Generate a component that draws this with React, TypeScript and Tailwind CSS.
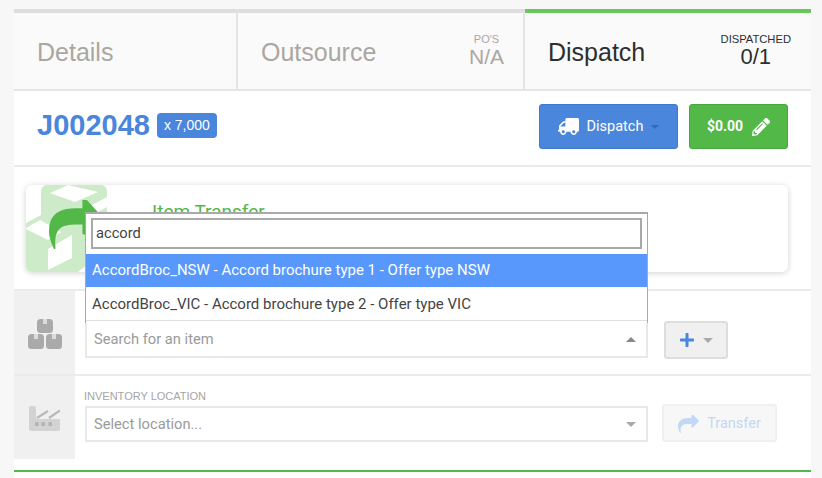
import { FaPencilAlt, FaPlus, FaTruck } from 'react-icons/fa';

const SHARE_PATH =
  'M1792 640q0 26-19 45l-512 512q-19 19-45 19t-45-19-19-45v-256h-224q-98 0-175.5 6t-154 21.5-133 42.5-105.5 69.5-80 101-48.5 138.5-17.5 181q0 55 5 123 0 6 2.5 23.5t2.5 26.5q0 15-8.5 25t-23.5 10q-16 0-28-17-7-9-13-22t-13.5-30-10.5-24q-127-285-127-451 0-199 53-333 162-403 875-403h224v-256q0-26 19-45t45-19 45 19l512 512q19 19 19 45z';

const Caret = ({ up, color, w = 10 }: { up?: boolean; color: string; w?: number }) => (
  <svg width={w} height={w / 2} viewBox="0 0 10 5" style={{ transform: up ? 'rotate(180deg)' : undefined }}>
    <path d="M0 0h10L5 5z" fill={color} />
  </svg>
);

// Boxes logo of the transfer card
const TransferLogo = () => (
  <svg width="82" height="87" viewBox="0 0 82 87" className="shrink-0">
    <path
      d="M21 0h54a6 6 0 0 1 6 6v58L52 87H6a6 6 0 0 1-6-6V38l15-8V6a6 6 0 0 1 6-6z"
      fill="#cdebc8"
    />
    <path d="M24 8 L42 0 L72 7 L49 17z" fill="#fff" />
    <path d="M0 43 L14 35 L35 47 L22 55 L0 44z" fill="#fff" />
    <path d="M22 64 L46 50 V73 L22 85z" fill="#fff" />
    <path d="M62 22 L81 12 V22 L70 28z" fill="#fff" />
    <svg x="23" y="15" width="52" height="49" viewBox="0 128 1792 1536" preserveAspectRatio="none">
      <path d={SHARE_PATH} fill="#52b848" />
    </svg>
  </svg>
);

const BoxesIcon = () => (
  <svg width="34" height="30" viewBox="0 0 34 30">
    <rect x="9" y="0" width="16" height="14" rx="3.5" fill="#aaaaaa" />
    <rect x="0" y="15" width="16" height="15" rx="3.5" fill="#aaaaaa" />
    <rect x="18" y="15" width="16" height="15" rx="3.5" fill="#aaaaaa" />
    <rect x="15" y="0" width="4" height="5" fill="#dcdcdc" />
    <rect x="6" y="15" width="4" height="5" fill="#dcdcdc" />
    <rect x="24" y="15" width="4" height="5" fill="#dcdcdc" />
  </svg>
);

const FactoryIcon = () => (
  <svg width="31" height="25" viewBox="0 0 31 25">
    <path d="M2 0h3a2 2 0 0 1 2 2v11h24v10a2 2 0 0 1-2 2H2a2 2 0 0 1-2-2V2a2 2 0 0 1 2-2z" fill="#d3d3d3" />
    <path d="M8 12 L19 5 M20 12 L31 4.5" stroke="#b9b9b9" strokeWidth="2.2" />
    <rect x="6" y="16" width="3.5" height="4" fill="#b5b5b5" />
    <rect x="12.5" y="16" width="3.5" height="4" fill="#b5b5b5" />
    <rect x="19.5" y="16" width="3.5" height="4" fill="#b5b5b5" />
  </svg>
);

export default function App() {
  return (
    <div className="h-[478px] w-[822px] overflow-hidden bg-[#f7f7f7] pl-[14px] pr-[11px] pt-[9px] font-['Roboto',sans-serif]">
      <div className="relative h-[469px] bg-white">
        {/* tabs */}
        <div className="flex h-[82px] border-b-2 border-[#e5e5e5] bg-[#fafafa] font-['Liberation_Sans',sans-serif]">
          <div className="w-[224px] border-r-2 border-t-4 border-r-[#e5e5e5] border-t-[#dedede] pl-[23px] pt-[25px] text-[25px] leading-[28px] text-[#aaa7a2]">
            Details
          </div>
          <div className="flex w-[287px] items-start justify-between border-r-2 border-t-4 border-r-[#e5e5e5] border-t-[#dedede] pl-[23px] pr-[19px] pt-[25px]">
            <span className="text-[25px] leading-[28px] text-[#aaa7a2]">Outsource</span>
            <div className="-mt-[5px] text-center text-[#aaa7a2]">
              <div className="text-[11px] leading-[12px]">PO'S</div>
              <div className="text-[21px] leading-[24px]">N/A</div>
            </div>
          </div>
          <div className="flex flex-1 items-start justify-between border-t-4 border-[#67c75c] pl-[23px] pr-[20px] pt-[25px] text-[#2e2e2e]">
            <span className="text-[25px] leading-[28px]">Dispatch</span>
            <div className="-mt-[5px] text-center">
              <div className="text-[11.2px] leading-[12px]">DISPATCHED</div>
              <div className="text-[22px] leading-[24px]">0/1</div>
            </div>
          </div>
        </div>

        {/* job header */}
        <div className="flex h-[76px] items-start justify-between border-b-2 border-[#ebebeb] pl-[23px] pr-[23px] pt-[13px]">
          <div className="flex items-center gap-[7px] pt-[5px] font-['Liberation_Sans',sans-serif]">
            <span className="text-[29px] font-bold leading-[32px] text-[#4a86dc]">J002048</span>
            <span className="rounded-[4px] bg-[#4a86dc] px-[7px] py-[3px] text-[14px] leading-[19px] text-white">x 7,000</span>
          </div>
          <div className="flex gap-[11px]">
            <button className="flex h-[45px] w-[139px] items-center justify-center gap-[8px] rounded-[3px] border border-[#4279c8] bg-[#4a86dc] text-[14.5px] text-white">
              <FaTruck size={21} className="-scale-x-100" />
              <span>Dispatch</span>
              <Caret color="#3568b4" w={8} />
            </button>
            <button className="flex h-[45px] w-[99px] items-center justify-center gap-[9px] rounded-[3px] border border-[#4aa840] bg-[#52b848] text-[14px] font-bold text-white">
              <span>$0.00</span>
              <FaPencilAlt size={18} />
            </button>
          </div>
        </div>

        {/* item transfer */}
        <div className="relative h-[124px] border-b-2 border-[#ebebeb] px-[12px] pt-[18px]">
          <div className="flex h-[87px] w-[762px] rounded-[6px] bg-white shadow-[0_1px_6px_rgba(0,0,0,0.18)]">
            <TransferLogo />
            <span className="pl-[44px] pt-[16px] text-[19px] leading-[22px] text-[#52b848]">Item Transfer</span>
          </div>

          {/* open dropdown */}
          <div className="absolute left-[71px] top-[45px] z-10 h-[111px] w-[563px] border border-b-0 border-t-2 border-[#a9a9a9] bg-white pt-[4px] text-[15px] text-[#444]">
            <div className="mx-[5px] flex h-[31px] items-center border-2 border-[#a9a9a9] px-[3px] text-[14.7px]">accord</div>
            <div className="mt-[5px] flex h-[33px] items-center bg-[#5897fb] px-[6px] text-white">
              AccordBroc_NSW - Accord brochure type 1 - Offer type NSW
            </div>
            <div className="flex h-[34px] items-center border-b border-[#dedede] px-[6px] pt-[1px]">
              AccordBroc_VIC - Accord brochure type 2 - Offer type VIC
            </div>
          </div>
        </div>

        {/* item search */}
        <div className="flex h-[85px] border-b-2 border-[#ebebeb]">
          <div className="flex w-[61px] items-center justify-center bg-[#f0f0f0] pt-[2px]">
            <BoxesIcon />
          </div>
          <div className="flex items-start gap-[16px] pl-[10px] pt-[30px]">
            <div className="flex h-[37px] w-[563px] items-center justify-between border-2 border-[#e8e8e8] pl-[7px] pr-[10px] text-[14.7px] text-[#9a9a9a]">
              <span>Search for an item</span>
              <Caret up color="#888888" />
            </div>
            <button className="flex h-[38px] w-[64px] items-center justify-center gap-[8px] rounded-[3px] border-2 border-[#dddddd] bg-[#f0f0f0]">
              <FaPlus size={16} className="text-[#4a86dc]" />
              <Caret color="#aaaaaa" />
            </button>
          </div>
        </div>

        {/* inventory location */}
        <div className="flex h-[83px]">
          <div className="flex w-[61px] items-center justify-center bg-[#f0f0f0] pt-[2px]">
            <FactoryIcon />
          </div>
          <div className="pl-[10px] pt-[14px]">
            <div className="-ml-[1px] font-['Liberation_Sans',sans-serif] text-[11px] leading-[12px] text-[#a5a5a5]">INVENTORY LOCATION</div>
            <div className="mt-[4px] flex items-start gap-[14px]">
              <div className="flex h-[36px] w-[563px] items-center justify-between border-2 border-[#e8e8e8] pl-[7px] pr-[10px] text-[14.7px] text-[#9a9a9a]">
                <span>Select location...</span>
                <Caret color="#aaaaaa" />
              </div>
              <button className="-mt-[2px] flex h-[38px] w-[115px] items-center justify-center gap-[8px] rounded-[3px] border-2 border-[#f0f0f0] bg-[#f7f7f7] pt-[1px] text-[14.5px] text-[#c3d8f5]">
                <svg width="21" height="18" viewBox="0 128 1792 1536" preserveAspectRatio="none">
                  <path d={SHARE_PATH} fill="#c3d8f5" />
                </svg>
                <span>Transfer</span>
              </button>
            </div>
          </div>
        </div>

        <div className="mt-[11px] h-[2px] bg-[#52b848]" />
      </div>
    </div>
  );
}
